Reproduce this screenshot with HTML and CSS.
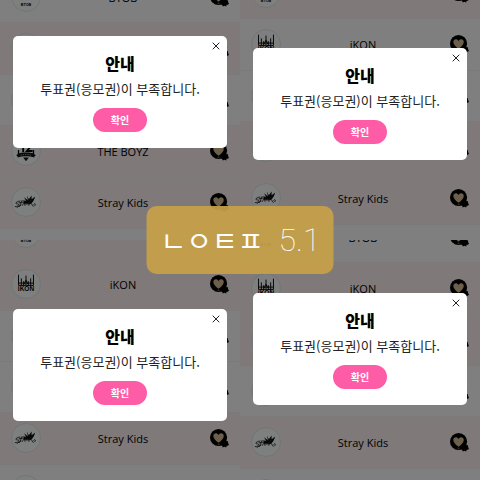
FILE: index.html
```
<!DOCTYPE html>
<html lang="ko">
<head>
  <meta charset="UTF-8" />
  <meta name="viewport" content="width=device-width, initial-scale=1.0"/>
  <title>안내</title>
  <link rel="stylesheet" href="styles.css">
</head>
<body>
  <!-- Shared icons -->
  <svg class="sprite" aria-hidden="true">
    <symbol id="logo-btob" viewBox="0 0 30 30">
      <path d="M9 7c1 6 5 6 6 2c1 4 5 4 6-2M10 13c2 5 4 4 5 0c1 4 3 5 5 0" fill="none" stroke="#000" stroke-width="2"/>
      <text x="15" y="25" class="logo-text small">BTOB</text>
    </symbol>
    <symbol id="logo-ikon" viewBox="0 0 30 30">
      <path d="M7 5v11.500h16V5M10 9v8M12.500 12v5M15 6v10M17.500 12v5M20 9v8M7 14h16M13 15l2-4l2 4" fill="none" stroke="#000" stroke-width="1"/>
      <text x="15" y="23" class="logo-text">iKON</text>
    </symbol>
    <symbol id="logo-boyz" viewBox="0 0 30 30">
      <path d="M9 9h6M12 9v7M16 9h5l-5 6h6" fill="none" stroke="#000" stroke-width="2"/>
      <path d="M7 14v5l-2 1M23 14v5l2 1" fill="none" stroke="#000" stroke-width="1.400"/>
      <path d="M6 18c5-2 13-2 18 0v4c-5-2-13-2-18 0z" fill="#111"/>
      <path d="M9 19.500c4-1 8-1 12 0" fill="none" stroke="#999" stroke-width="1" stroke-dasharray="1.500 1"/>
      <path d="M12 22l3 4l3-4z" fill="#111"/>
    </symbol>
    <symbol id="logo-stray" viewBox="0 0 30 30">
      <path d="M9 14c-4 0-7 3-3 3c3 1 0 3-3 3M8 20l3-7M7 16l5-1M11 19l2-4l1 4M15 18c0-4 3-3 2 0M18 19l1-5M19 17l3-2M20 16l3 4M23 18c2-3 3 1 1 1M5 21l5-3" fill="none" stroke="#000" stroke-width=".8"/>
      <path d="M12 13l3 1l-2-4l4 3l-1-5l2 4l3-4l0 4l4-3l-2 5l-3 3l-7 0z" fill="#111"/>
    </symbol>
    <symbol id="vote" viewBox="0 0 20 20">
      <circle cx="9" cy="9" r="9" fill="#000"/>
      <path d="M16 12l1.500 1l1.500 0l0 2l1 1l-1 1.500l-1.500 .2l-.5 1.800l-1.800-.7l-1.700 .7l-.8-2l-1.700-1l1-2.500z" fill="#000"/>
      <path d="M9 14.500C6 12 3.500 10 3.500 7.300C3.500 4 7.500 3.500 9 6.300C10.500 3.500 14.500 4 14.500 7.300C14.500 10 12 12 9 14.500z" fill="#d8bf96"/>
      <path d="M8 16l2 0" stroke="#aa8f55"/>
    </symbol>
    <symbol id="close" viewBox="0 0 8 8">
      <path d="M.7 .7l6.600 6.600M7.300 .7l-6.600 6.600" fill="none" stroke="#222" stroke-width="1"/>
    </symbol>
  </svg>

  <main class="screens">
    <section class="screen">
      <ul class="artists scroll-a">
        <li><svg class="logo"><use href="#logo-btob"/></svg><span>BTOB</span><svg class="vote"><use href="#vote"/></svg></li>
        <li class="pink"><svg class="logo"></svg><span></span><svg class="vote"><use href="#vote"/></svg></li>
        <li><svg class="logo"></svg><span></span><svg class="vote"><use href="#vote"/></svg></li>
        <li class="pink"><svg class="logo"><use href="#logo-boyz"/></svg><span>THE BOYZ</span><svg class="vote"><use href="#vote"/></svg></li>
        <li class="pink"><svg class="logo"><use href="#logo-stray"/></svg><span>Stray Kids</span><svg class="vote"><use href="#vote"/></svg></li>
        <li><svg class="logo"></svg><span></span><svg class="vote"><use href="#vote"/></svg></li>
      </ul>
      <div class="overlay drop-1">
        <div class="dialog" role="dialog" aria-label="안내">
          <button class="close-btn" aria-label="닫기"><svg><use href="#close"/></svg></button>
          <h2>안내</h2>
          <p>투표권(응모권)이 부족합니다.</p>
          <button class="ok-btn">확인</button>
        </div>
      </div>
    </section>

    <section class="screen">
      <ul class="artists scroll-b">
        <li class="pink"><svg class="logo"><use href="#logo-btob"/></svg><span></span><svg class="vote"><use href="#vote"/></svg></li>
        <li><svg class="logo"><use href="#logo-ikon"/></svg><span>iKON</span><svg class="vote"><use href="#vote"/></svg></li>
        <li><svg class="logo"></svg><span></span><svg class="vote"><use href="#vote"/></svg></li>
        <li class="pink"><svg class="logo"></svg><span></span><svg class="vote"><use href="#vote"/></svg></li>
        <li class="pink"><svg class="logo"><use href="#logo-stray"/></svg><span>Stray Kids</span><svg class="vote"><use href="#vote"/></svg></li>
        <li><svg class="logo"></svg><span></span><svg class="vote"></svg></li>
      </ul>
      <div class="overlay drop-2">
        <div class="dialog" role="dialog" aria-label="안내">
          <button class="close-btn" aria-label="닫기"><svg><use href="#close"/></svg></button>
          <h2>안내</h2>
          <p>투표권(응모권)이 부족합니다.</p>
          <button class="ok-btn">확인</button>
        </div>
      </div>
    </section>

    <section class="screen">
      <ul class="artists scroll-b">
        <li class="pink"><svg class="logo"><use href="#logo-btob"/></svg><span></span><svg class="vote"></svg></li>
        <li class="pink"><svg class="logo"><use href="#logo-ikon"/></svg><span>iKON</span><svg class="vote"><use href="#vote"/></svg></li>
        <li><svg class="logo"></svg><span></span><svg class="vote"><use href="#vote"/></svg></li>
        <li><svg class="logo"></svg><span></span><svg class="vote"><use href="#vote"/></svg></li>
        <li class="pink"><svg class="logo"><use href="#logo-stray"/></svg><span>Stray Kids</span><svg class="vote"><use href="#vote"/></svg></li>
        <li><svg class="logo"></svg><span></span><svg class="vote"></svg></li>
      </ul>
      <div class="overlay drop-3">
        <div class="dialog" role="dialog" aria-label="안내">
          <button class="close-btn" aria-label="닫기"><svg><use href="#close"/></svg></button>
          <h2>안내</h2>
          <p>투표권(응모권)이 부족합니다.</p>
          <button class="ok-btn">확인</button>
        </div>
      </div>
    </section>

    <section class="screen">
      <ul class="artists scroll-a">
        <li><svg class="logo"><use href="#logo-btob"/></svg><span>BTOB</span><svg class="vote"><use href="#vote"/></svg></li>
        <li class="pink"><svg class="logo"><use href="#logo-ikon"/></svg><span>iKON</span><svg class="vote"><use href="#vote"/></svg></li>
        <li class="pink"><svg class="logo"></svg><span></span><svg class="vote"><use href="#vote"/></svg></li>
        <li><svg class="logo"></svg><span></span><svg class="vote"><use href="#vote"/></svg></li>
        <li class="pink"><svg class="logo"><use href="#logo-stray"/></svg><span>Stray Kids</span><svg class="vote"><use href="#vote"/></svg></li>
        <li><svg class="logo"></svg><span></span><svg class="vote"></svg></li>
      </ul>
      <div class="overlay drop-4">
        <div class="dialog" role="dialog" aria-label="안내">
          <button class="close-btn" aria-label="닫기"><svg><use href="#close"/></svg></button>
          <h2>안내</h2>
          <p>투표권(응모권)이 부족합니다.</p>
          <button class="ok-btn">확인</button>
        </div>
      </div>
    </section>

    <!-- Version label on top of the four screens -->
    <div class="version">
      <span class="version-name">ㄴㅇㅌㅍ</span>
      <span class="version-number">5.1</span>
    </div>
  </main>
</body>
</html>
```
FILE: styles.css
```
* {
  box-sizing: border-box;
}

body {
  margin: 0;
  font-family: "Noto Sans CJK KR", sans-serif;
  color: #000;
}

.sprite {
  position: absolute;
  width: 0;
  height: 0;
}

.logo-text {
  font-family: "Liberation Sans", sans-serif;
  font-size: 7px;
  font-weight: bold;
  text-anchor: middle;
}

.logo-text.small {
  font-size: 4px;
}

.screens {
  position: relative;
  display: grid;
  grid-template-columns: 1fr 1fr;
  grid-template-rows: 1fr 1fr;
  height: 100vh;
  overflow: hidden;
}

.screen {
  position: relative;
  overflow: hidden;
  background: #fff;
}

/* Artist list */
.artists {
  display: grid;
  grid-auto-rows: 1fr;
  height: 308px;
  margin: 0;
  padding: 0;
  list-style: none;
}

.scroll-a {
  margin-top: -28px;
}

.scroll-b {
  margin-top: -32px;
}

.artists li {
  display: flex;
  align-items: center;
  justify-content: space-between;
  padding: 0 11px;
  font-family: "Open Sans", sans-serif;
  font-size: 11px;
  border-bottom: 1px solid #f6f2f4;
}

.artists .pink {
  background: #fff2f5;
}

.logo {
  width: 30px;
  height: 30px;
  border: 1px solid #e4eaec;
  border-radius: 50%;
  background: #fcfefe;
}

.vote {
  width: 19px;
  height: 19px;
}

.artists span {
  flex: 1;
  padding-left: 10px;
  padding-right: 15px;
  text-align: center;
}

/* Dialog */
.overlay {
  position: absolute;
  inset: 0;
  padding: 0 13px;
  background: rgba(0, 0, 0, 0.5);
}

.drop-1 {
  padding-top: 36px;
}

.drop-2 {
  padding-top: 48px;
}

.drop-3 {
  padding-top: 69px;
}

.drop-4 {
  padding-top: 53px;
}

.dialog {
  position: relative;
  padding: 15px 8px 16px;
  border-radius: 5px;
  background: #fff;
  text-align: center;
}

.dialog h2 {
  margin: 0;
  font-size: 16px;
  font-weight: 900;
  line-height: 24px;
}

.dialog p {
  margin: 3px 0 9px;
  color: #222;
  font-size: 13px;
  line-height: 21px;
  white-space: nowrap;
}

.ok-btn {
  display: block;
  width: 54px;
  height: 24px;
  margin: 0 auto;
  padding: 0;
  border: none;
  border-radius: 12px;
  background: #ff5ca8;
  color: #fff;
  font-family: inherit;
  font-size: 10px;
  font-weight: bold;
  line-height: 24px;
  cursor: pointer;
}

.close-btn {
  position: absolute;
  top: 6px;
  right: 7px;
  display: flex;
  padding: 0;
  border: none;
  background: none;
  cursor: pointer;
}

.close-btn svg {
  width: 8px;
  height: 8px;
}

/* Version label */
.version {
  position: absolute;
  top: 50%;
  left: 50%;
  transform: translate(-50%, -50%);
  display: flex;
  align-items: center;
  gap: 15px;
  padding: 14px 13px 14px 14px;
  border-radius: 10px;
  background: rgba(198, 160, 72, 0.93);
  color: #fff;
  line-height: 40px;
}

.version-name {
  font-size: 28px;
}

.version-number {
  font-family: Roboto, sans-serif;
  font-size: 32px;
  font-weight: 100;
}
```
